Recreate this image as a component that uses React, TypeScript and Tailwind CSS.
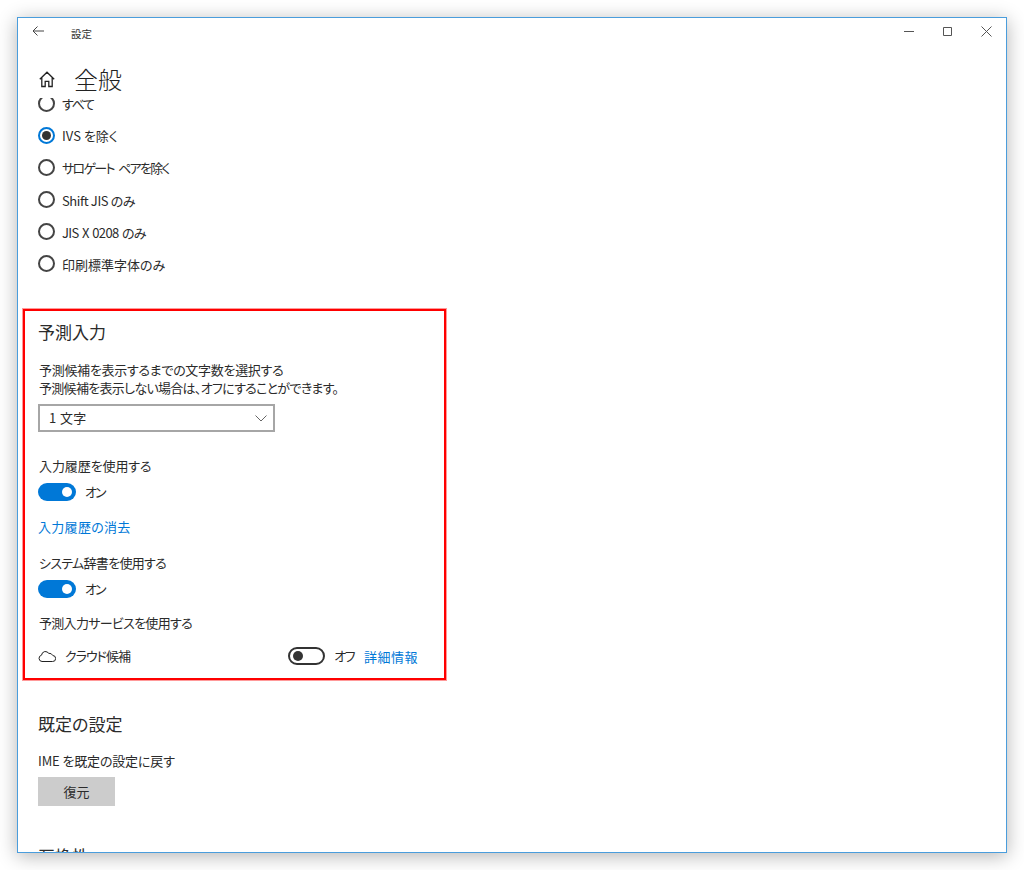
import React from 'react';

const font = "font-['Noto_Sans_CJK_JP','Noto_Sans',sans-serif] [font-feature-settings:'palt']";

function Radio({ label, checked, low, className = '' }: { label: string; checked?: boolean; low?: boolean; className?: string }) {
  return (
    <div className="flex items-center h-8">
      <div className={`w-[17px] h-[17px] rounded-full border-2 flex items-center justify-center ${checked ? 'border-[#0078d7]' : 'border-[#444444]'}`}>
        {checked && <div className="w-[9px] h-[9px] rounded-full bg-[#333333]" />}
      </div>
      <span className={`ml-[7px] text-[13px] leading-[18px] text-[#2b2b2b] ${low ? 'mt-[3px]' : 'mt-[1px]'} ${className}`}>{label}</span>
    </div>
  );
}

function Toggle({ on }: { on?: boolean }) {
  if (on) {
    return (
      <div className="w-[38px] h-[18px] rounded-full bg-[#0078d7] flex items-center justify-end pr-1">
        <div className="w-[10px] h-[10px] rounded-full bg-white" />
      </div>
    );
  }
  return (
    <div className="w-[37px] h-[18px] rounded-full border-2 border-[#333333] flex items-center pl-[3px]">
      <div className="w-[10px] h-[10px] rounded-full bg-[#333333]" />
    </div>
  );
}

function Label({ children, className = '' }: { children: React.ReactNode; className?: string }) {
  return <div className={`text-[13px] leading-[18px] text-[#2b2b2b] ${className}`}>{children}</div>;
}

function App() {
  return (
    <div className={`w-[1024px] h-[870px] bg-white pl-[17px] pt-[17px] overflow-hidden ${font}`}>
      <div className="w-[990px] h-[836px] bg-white border border-[#4a9ddc] shadow-[0_3px_18px_rgba(0,0,0,0.3)] flex flex-col overflow-hidden">
        {/* title bar */}
        <div className="h-[30px] shrink-0 flex items-center">
          <svg width="12" height="12" viewBox="0 0 12 12" className="ml-[14px] mb-[5px]" fill="none" stroke="#444444" strokeWidth="1">
            <path d="M12 6H1M5.500 1.500 1 6l4.500 4.500" />
          </svg>
          <span className="ml-[27px] text-[10.5px] text-[#333333] mt-[1px]">設定</span>
          <div className="ml-auto flex items-center mr-[14px] mb-[3px]">
            <svg width="11" height="11" viewBox="0 0 11 11" fill="none" stroke="#555555">
              <path d="M0 5.500h10" />
            </svg>
            <svg width="11" height="11" viewBox="0 0 11 11" fill="none" stroke="#555555" className="ml-[27px]">
              <path d="M1.500 1.500h8v8h-8z" />
            </svg>
            <svg width="11" height="11" viewBox="0 0 11 11" fill="none" stroke="#555555" className="ml-[28px]">
              <path d="M.5.5l10 10M10.500.5l-10 10" />
            </svg>
          </div>
        </div>

        {/* page header */}
        <div className="h-[50px] shrink-0 flex items-center pl-[21px] pt-[12px]">
          <svg width="16" height="17" viewBox="0 0 16 17" fill="none" stroke="#222222" strokeWidth="1.3">
            <path d="M.8 8.200 8 1.200l7.200 7M2.800 6.800v8.700h3.400v-5.200h3.600v5.200h3.400V6.800" />
          </svg>
          <span className="ml-[19px] text-[24px] leading-[32px] text-[#222222] font-light">全般</span>
        </div>

        {/* scrolled content, cut off by the header and the window bottom */}
        <div className="flex-1 overflow-hidden pl-[20px]">
          <div className="mt-[-11px]">
            <Radio label="すべて" className="tracking-[-1.3px]" />
            <Radio label="IVS を除く" checked />
            <Radio label="サロゲート ペアを除く" className="tracking-[-1.7px] [word-spacing:3px]" />
            <Radio label="Shift JIS のみ" low className="tracking-[-0.4px]" />
            <Radio label="JIS X 0208 のみ" low className="tracking-[-0.6px] [word-spacing:1px]" />
            <Radio label="印刷標準字体のみ" low />
          </div>

          <section className="mt-[30px] ml-[-15px] w-[423px] h-[371px] border-2 border-[#ff0000] shadow-[0_0_0_1px_rgba(255,0,0,0.4)] pl-[13px] pt-[5px]">
            <h2 className="h-8 flex items-center text-[17px] text-[#2b2b2b] font-normal">予測入力</h2>
            <Label className="mt-[13px] ml-[1px]">
              <span className="tracking-[-0.3px]">予測候補を表示するまでの文字数を選択する</span>
              <br />
              <span className="tracking-[-0.7px]">予測候補を表示しない場合は、オフにすることができます。</span>
            </Label>
            <div className="mt-[7px] w-[237px] h-[28px] border-2 border-[#a6a6a6] flex items-center pl-[9px] pr-[6px]">
              <span className="text-[13px] text-[#2b2b2b] tracking-[0.4px]">1 文字</span>
              <svg width="12" height="7" viewBox="0 0 12 7" fill="none" stroke="#666666" className="ml-auto">
                <path d="M.5.5 6 6l5.500-5.500" />
              </svg>
            </div>
            <Label className="mt-[25px] ml-[1px] tracking-[-0.1px]">入力履歴を使用する</Label>
            <div className="mt-2 flex items-center">
              <Toggle on />
              <span className="ml-[9px] text-[13px] leading-[18px] text-[#2b2b2b] tracking-[-2px]">オン</span>
            </div>
            <Label className="mt-[17px] !text-[#0078d7] tracking-[0.3px]">入力履歴の消去</Label>
            <Label className="mt-[18px] ml-[1px] tracking-[-0.7px]">システム辞書を使用する</Label>
            <div className="mt-2 flex items-center">
              <Toggle on />
              <span className="ml-[9px] text-[13px] leading-[18px] text-[#2b2b2b] tracking-[-2px]">オン</span>
            </div>
            <Label className="mt-4 ml-[1px] tracking-[-0.7px]">予測入力サービスを使用する</Label>
            <div className="mt-[14px] w-[380px] flex items-center justify-between">
              <div className="flex items-center">
                <svg width="18" height="12" viewBox="0 0 18 12" fill="none" stroke="#222222">
                  <path d="M4 11.500h10.500a3 3 0 0 0 .3-6 4 4 0 0 0-4-2.200A5 5 0 0 0 6.800 1.500 4.300 4.300 0 0 0 3.500 5.200 3.200 3.200 0 0 0 4 11.500z" />
                </svg>
                <span className="ml-[9px] text-[13px] leading-[18px] text-[#2b2b2b] tracking-[-1px]">クラウド候補</span>
              </div>
              <div className="flex items-center">
                <Toggle />
                <span className="ml-[9px] text-[13px] leading-[18px] text-[#2b2b2b] mb-[1px] tracking-[-1.5px]">オフ</span>
                <span className="ml-[10px] text-[13px] leading-[18px] text-[#0078d7] mt-[2px] tracking-[0.5px]">詳細情報</span>
              </div>
            </div>
          </section>

          <h2 className="mt-[32px] h-6 flex items-center text-[17px] text-[#2b2b2b] font-normal">既定の設定</h2>
          <Label className="mt-4 tracking-[-0.15px]">IME を既定の設定に戻す</Label>
          <div className="mt-[7px] w-[77px] h-[29px] bg-[#cccccc] flex items-center justify-center text-[13px] text-[#2b2b2b]">復元</div>
          <h2 className="mt-[38px] h-6 flex items-center text-[17px] text-[#2b2b2b] font-normal">互換性</h2>
        </div>
      </div>
    </div>
  );
}

export default App;
